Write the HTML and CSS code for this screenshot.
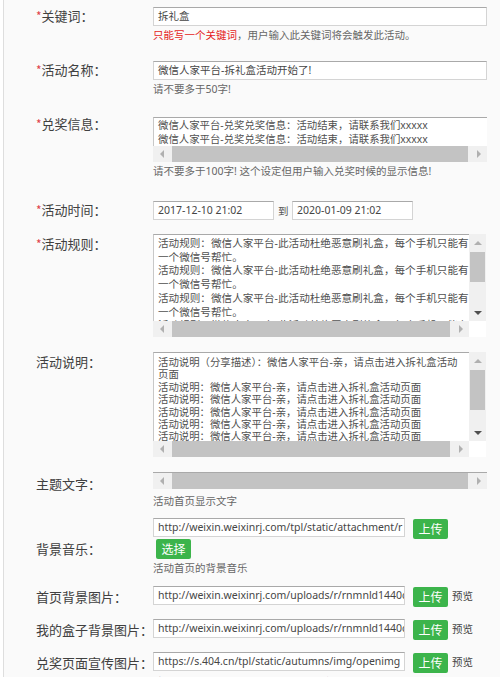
FILE: index.html
```html
<!DOCTYPE html>
<html lang="zh-CN">
<head>
<meta charset="utf-8">
<title>拆礼盒活动设置</title>
<link rel="stylesheet" href="styles.css">
</head>
<body>
<div class="page">

  <div class="row r1">
    <div class="lbl lbl-inp"><span class="req">*</span>关键词：</div>
    <div class="fld">
      <div class="inp w-full">拆礼盒</div>
      <div class="hint"><span class="red">只能写一个关键词</span>，用户输入此关键词将会触发此活动。</div>
    </div>
  </div>

  <div class="row r2">
    <div class="lbl lbl-inp"><span class="req">*</span>活动名称：</div>
    <div class="fld">
      <div class="inp w-full">微信人家平台-拆礼盒活动开始了!</div>
      <div class="hint">请不要多于50字!</div>
    </div>
  </div>

  <div class="row r3">
    <div class="lbl lbl-ta3"><span class="req">*</span>兑奖信息：</div>
    <div class="fld">
      <div class="ta">
        <div class="ta-text ta-small">
          <div class="ln">微信人家平台-兑奖兑奖信息：活动结束，请联系我们xxxxx</div>
          <div class="ln">微信人家平台-兑奖兑奖信息：活动结束，请联系我们xxxxx</div>
        </div>
        <div class="hbar">
          <span class="ab"><span class="tri tl"></span></span>
          <span class="hthumb"></span>
          <span class="ab"><span class="tri tr"></span></span>
        </div>
      </div>
      <div class="hint">请不要多于100字! 这个设定但用户输入兑奖时候的显示信息!</div>
    </div>
  </div>

  <div class="row r4">
    <div class="lbl lbl-inp"><span class="req">*</span>活动时间：</div>
    <div class="fld">
      <div class="dates">
        <div class="inp w-date">2017-12-10 21:02</div>
        <span class="to">到</span>
        <div class="inp w-date">2020-01-09 21:02</div>
      </div>
    </div>
  </div>

  <div class="row r5">
    <div class="lbl lbl-ta"><span class="req">*</span>活动规则：</div>
    <div class="fld">
      <div class="ta">
        <div class="ta-top">
          <div class="ta-text ta-rule">
            <div class="ln">活动规则：微信人家平台-此活动杜绝恶意刷礼盒，每个手机只能有</div>
            <div class="ln">一个微信号帮忙。</div>
            <div class="ln">活动规则：微信人家平台-此活动杜绝恶意刷礼盒，每个手机只能有</div>
            <div class="ln">一个微信号帮忙。</div>
            <div class="ln">活动规则：微信人家平台-此活动杜绝恶意刷礼盒，每个手机只能有</div>
            <div class="ln">一个微信号帮忙。</div>
            <div class="ln">活动规则：微信人家平台-此活动杜绝恶意刷礼盒，每个手机只能有</div>
          </div>
          <div class="vbar vbar-rule">
            <span class="vab"><span class="tri tu"></span></span>
            <span class="vthumb"></span>
            <span class="vab"><span class="tri td"></span></span>
          </div>
        </div>
        <div class="ta-bottom">
          <div class="hbar">
            <span class="ab"><span class="tri tl"></span></span>
            <span class="hthumb"></span>
            <span class="ab"><span class="tri tr"></span></span>
          </div>
          <div class="corner"></div>
        </div>
      </div>
    </div>
  </div>

  <div class="row r6">
    <div class="lbl lbl-ta">活动说明：</div>
    <div class="fld">
      <div class="ta">
        <div class="ta-top">
          <div class="ta-text ta-desc">
            <div class="ln">活动说明（分享描述）：微信人家平台-亲，请点击进入拆礼盒活动</div>
            <div class="ln">页面</div>
            <div class="ln">活动说明：微信人家平台-亲，请点击进入拆礼盒活动页面</div>
            <div class="ln">活动说明：微信人家平台-亲，请点击进入拆礼盒活动页面</div>
            <div class="ln">活动说明：微信人家平台-亲，请点击进入拆礼盒活动页面</div>
            <div class="ln">活动说明：微信人家平台-亲，请点击进入拆礼盒活动页面</div>
            <div class="ln">活动说明：微信人家平台-亲，请点击进入拆礼盒活动页面</div>
          </div>
          <div class="vbar vbar-desc">
            <span class="vab"><span class="tri tu"></span></span>
            <span class="vthumb"></span>
            <span class="vab"><span class="tri td"></span></span>
          </div>
        </div>
        <div class="ta-bottom">
          <div class="hbar">
            <span class="ab"><span class="tri tl"></span></span>
            <span class="hthumb"></span>
            <span class="ab"><span class="tri tr"></span></span>
          </div>
          <div class="corner"></div>
        </div>
      </div>
    </div>
  </div>

  <div class="row r7">
    <div class="lbl lbl-bar">主题文字：</div>
    <div class="fld">
      <div class="hbar hbar-solo">
        <span class="ab"><span class="tri tl"></span></span>
        <span class="hthumb"></span>
        <span class="ab"><span class="tri tr"></span></span>
      </div>
      <div class="hint hint-far">活动首页显示文字</div>
    </div>
  </div>

  <div class="row r8">
    <div class="lbl lbl-music">背景音乐：</div>
    <div class="fld">
      <div class="urlrow">
        <div class="inp w-url">http://weixin.weixinrj.com/tpl/static/attachment/r</div>
        <span class="btn">上传</span>
      </div>
      <span class="btn btn-pick">选择</span>
      <div class="hint">活动首页的背景音乐</div>
    </div>
  </div>

  <div class="row r9">
    <div class="lbl lbl-url">首页背景图片：</div>
    <div class="fld">
      <div class="urlrow">
        <div class="inp w-url">http://weixin.weixinrj.com/uploads/r/rnmnld1440c</div>
        <span class="btn">上传</span>
        <span class="pv">预览</span>
      </div>
    </div>
  </div>

  <div class="row r10">
    <div class="lbl lbl-url">我的盒子背景图片：</div>
    <div class="fld">
      <div class="urlrow">
        <div class="inp w-url">http://weixin.weixinrj.com/uploads/r/rnmnld1440c</div>
        <span class="btn">上传</span>
        <span class="pv">预览</span>
      </div>
    </div>
  </div>

  <div class="row r11">
    <div class="lbl lbl-url">兑奖页面宣传图片：</div>
    <div class="fld">
      <div class="urlrow">
        <div class="inp w-url">https://s.404.cn/tpl/static/autumns/img/openimg</div>
        <span class="btn">上传</span>
        <span class="pv">预览</span>
      </div>
      <div class="hint">请上传图片，建议尺寸与默认图片一致</div>
    </div>
  </div>

</div>
</body>
</html>
```

FILE: styles.css
```css
* {
  box-sizing: border-box;
  margin: 0;
  padding: 0;
}

html, body {
  background: #ffffff;
}

body {
  font-family: "Noto Sans", "Noto Sans CJK SC", sans-serif;
  color: #444;
  overflow: hidden;
}

.page {
  margin-left: 3px;
  border-left: 1px solid #dedede;
  background: #fafafa;
  min-height: 677px;
  padding-top: 7px;
}

.row {
  display: flex;
  align-items: flex-start;
}

.r2 { margin-top: 19px; }
.r3 { margin-top: 21px; }
.r4 { margin-top: 23px; }
.r5 { margin-top: 14px; }
.r6 { margin-top: 15px; }
.r7 { margin-top: 15px; }
.r8 { margin-top: 10px; }
.r9 { margin-top: 11px; }
.r10 { margin-top: 12px; }
.r11 { margin-top: 12px; }

/* labels */
.lbl {
  flex: none;
  width: 149px;
  padding-left: 32px;
  font-family: "Noto Sans CJK SC", sans-serif;
  font-size: 13px;
  line-height: 19px;
  color: #404040;
  white-space: nowrap;
}

.req {
  color: #e0424a;
  font-size: 12px;
}

.lbl-inp { margin-top: -1px; }
.lbl-ta3 { margin-top: -3px; }
.lbl-ta { margin-top: 0; }
.lbl-bar { margin-top: 2px; }
.lbl-music { margin-top: 21px; }
.lbl-url { margin-top: 1px; }

.fld {
  flex: none;
  width: 334px;
}

/* inputs */
.inp {
  height: 19px;
  border: 1px solid #d4d4d4;
  border-top-color: #a9a9a9;
  background: #fff;
  padding: 0 4px;
  font-size: 10.5px;
  line-height: 17px;
  color: #454545;
  white-space: nowrap;
  overflow: hidden;
}

.w-full { width: 334px; }
.w-date { width: 121px; }
.w-url { width: 252px; }

.dates {
  display: flex;
  align-items: center;
}

.to {
  font-family: "Noto Sans CJK SC", sans-serif;
  font-size: 10.5px;
  margin: 0 3.5px 0 4px;
  color: #555;
}

.hint {
  margin-top: 2px;
  font-size: 10.5px;
  line-height: 14px;
  color: #666;
  white-space: nowrap;
}

.hint-far { margin-top: 5px; }

.red { color: #e51c23; }

/* textarea mock */
.ta {
  width: 333px;
}

.ta-top {
  display: flex;
}

.ta-text {
  flex: 1;
  background: #fff;
  border-top: 1px solid #a9a9a9;
  border-left: 1px solid #c8c8c8;
  padding: 0 4px;
  color: #505050;
  overflow: hidden;
  white-space: nowrap;
}

.ta-small {
  height: 29px;
  font-size: 10.4px;
  line-height: 13.5px;
  padding-top: 1px;
  width: 334px;
}

.ta-rule {
  height: 87px;
  font-size: 10.6px;
  line-height: 13.7px;
  padding-top: 2px;
}

.ta-desc {
  height: 89px;
  font-size: 10.4px;
  line-height: 12.4px;
  padding-top: 3px;
}

.ta-bottom {
  display: flex;
}

.corner {
  width: 17px;
  height: 16px;
  background: #fff;
  flex: none;
}

/* scrollbars */
.hbar {
  display: flex;
  height: 16px;
  background: #f0f0f0;
  flex: 1;
}

.ta > .hbar {
  width: 334px;
}

.hbar-solo {
  width: 334px;
  height: 17px;
  border-top: 1px solid #a9a9a9;
}

.ab {
  flex: none;
  width: 17px;
  display: flex;
  align-items: center;
  justify-content: center;
}

.hthumb {
  flex: 1;
  margin: 0 2px;
  background: #c3c3c3;
}

.vbar {
  flex: none;
  width: 17px;
  background: #f0f0f0;
  display: flex;
  flex-direction: column;
}

.vab {
  flex: none;
  height: 17px;
  display: flex;
  align-items: center;
  justify-content: center;
}

.vthumb {
  flex: none;
  margin: 1px 1px;
  background: #c3c3c3;
}

.vbar-rule .vthumb { height: 30px; }
.vbar-desc .vthumb { height: 40px; }

.vbar .vab:last-child { margin-top: auto; }

.tri {
  width: 0;
  height: 0;
  display: block;
}

.tl {
  border-top: 4px solid transparent;
  border-bottom: 4px solid transparent;
  border-right: 4px solid #b0b0b0;
}

.tr {
  border-top: 4px solid transparent;
  border-bottom: 4px solid transparent;
  border-left: 4px solid #b0b0b0;
}

.tu {
  border-left: 4px solid transparent;
  border-right: 4px solid transparent;
  border-bottom: 4px solid #b0b0b0;
}

.td {
  border-left: 4px solid transparent;
  border-right: 4px solid transparent;
  border-top: 4px solid #505050;
}

/* url rows */
.urlrow {
  display: flex;
  align-items: flex-start;
  height: 21px;
}

.btn {
  display: inline-block;
  width: 35px;
  height: 20px;
  background: #3cb44b;
  color: #fff;
  border-radius: 2px;
  font-family: "Noto Sans CJK SC", sans-serif;
  font-size: 12px;
  line-height: 20px;
  text-align: center;
}

.urlrow .btn {
  margin-left: 8px;
  margin-top: 1px;
}

.btn-pick {
  display: block;
  margin-left: 3px;
  margin-top: 0;
}

.pv {
  margin-left: 4px;
  margin-top: 3px;
  font-family: "Noto Sans CJK SC", sans-serif;
  font-size: 10.5px;
  line-height: 14px;
  color: #444;
}
```
